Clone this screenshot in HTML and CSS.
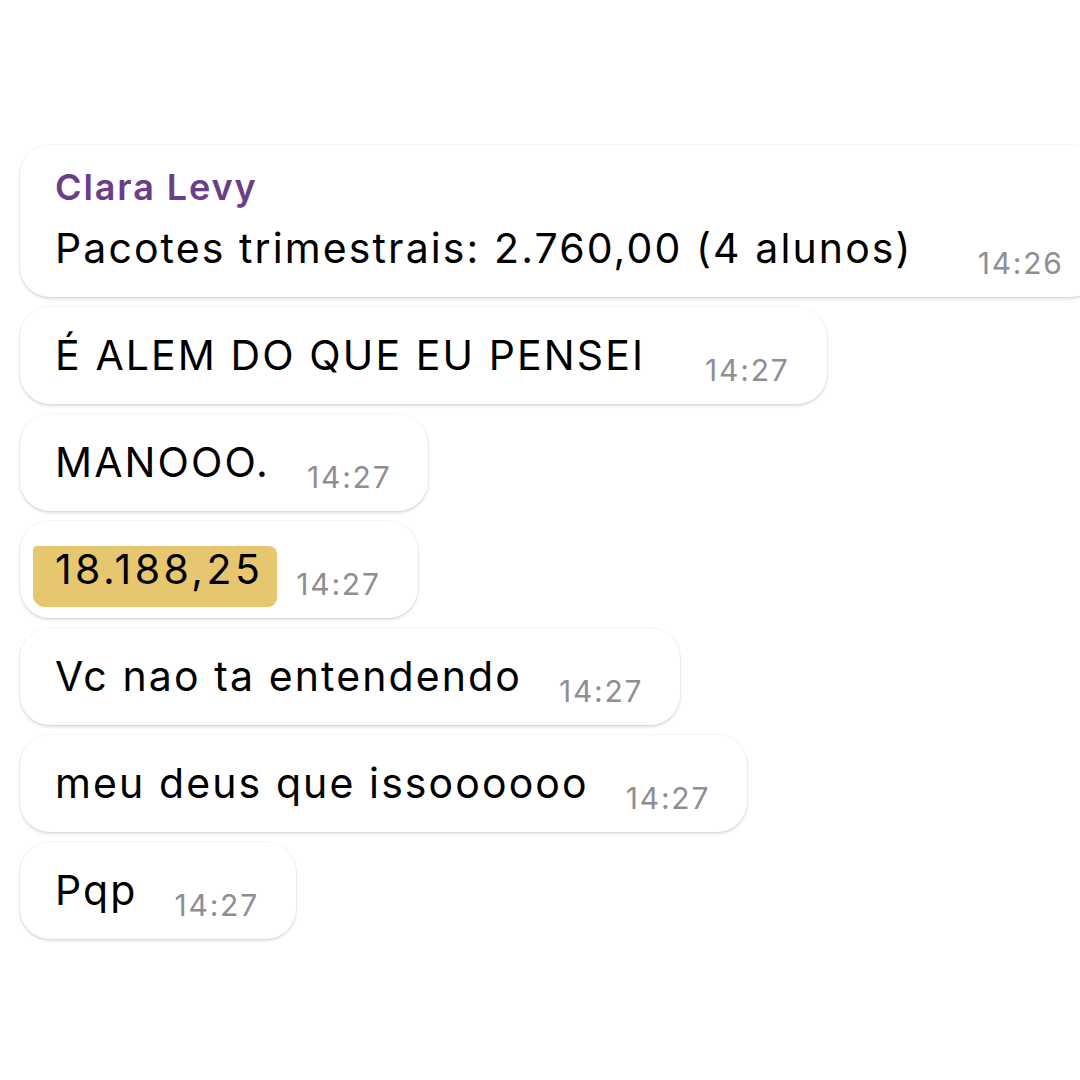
FILE: index.html
```html
<!DOCTYPE html>
<html lang="pt">
<head>
  <meta charset="UTF-8" />
  <meta name="viewport" content="width=device-width, initial-scale=1.0">
  <title>Conversa</title>
  <link rel="stylesheet" href="styles.css">
</head>
<body>

  <!-- mensagens recebidas -->
  <div class="chat">
    <div class="bubble first">
      <div class="sender">Clara Levy</div>
      <div class="line">Pacotes trimestrais: 2.760,00 (4 alunos)<span class="time wide">14:26</span></div>
    </div>

    <div class="bubble">
      <div class="line">É ALEM DO QUE EU PENSEI<span class="time wide2">14:27</span></div>
    </div>

    <div class="bubble">
      <div class="line">MANOOO.<span class="time">14:27</span></div>
    </div>

    <div class="bubble">
      <div class="line"><span class="mark">18.188,25</span><span class="time after-mark">14:27</span></div>
    </div>

    <div class="bubble">
      <div class="line">Vc nao ta entendendo<span class="time">14:27</span></div>
    </div>

    <div class="bubble">
      <div class="line">meu deus que issoooooo<span class="time">14:27</span></div>
    </div>

    <div class="bubble">
      <div class="line">Pqp<span class="time">14:27</span></div>
    </div>
  </div>

</body>
</html>
```

FILE: styles.css
```css
html, body {
  margin: 0;
  padding: 0;
  background: #fff;
  overflow: hidden;
}

body {
  font-family: Inter, "Noto Sans", sans-serif;
  color: #000;
  width: 1080px;
  height: 1080px;
}

.chat {
  display: flex;
  flex-direction: column;
  align-items: flex-start;
  gap: 10px;
  padding: 145px 0 0 20px;
}

.bubble {
  background: #fff;
  border-radius: 30px;
  padding: 0 37px 0 35px;
  box-shadow: 0 2px 3px rgba(0, 0, 0, 0.13), 0 0 0 1px rgba(0, 0, 0, 0.035);
  white-space: nowrap;
}

.line {
  font-size: 41px;
  line-height: 97px;
  letter-spacing: 2.1px;
}

.bubble.first {
  padding-top: 20px;
  padding-bottom: 10px;
}

.bubble.first .line {
  line-height: 78px;
}

.sender {
  font-size: 36px;
  line-height: 44px;
  font-weight: 600;
  letter-spacing: 1.9px;
  color: #6b3e88;
}

.time {
  font-size: 30px;
  line-height: 1;
  letter-spacing: 1.8px;
  color: #8e8e93;
  margin-left: 37px;
  vertical-align: -11px;
}

.time.wide {
  margin-left: 65px;
}

.time.wide2 {
  margin-left: 60px;
}

.mark {
  display: inline-block;
  line-height: 46px;
  letter-spacing: 3.4px;
  background: #e6c66f;
  margin-left: -22px;
  padding: 0 14px 15px 22px;
  border-radius: 4px 8px 9px 12px;
}

.time.after-mark {
  margin-left: 19px;
}
```
